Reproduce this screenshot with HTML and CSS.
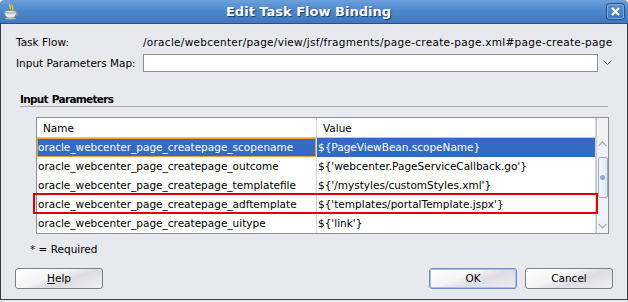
FILE: index.html
```html
<!DOCTYPE html>
<html>
<head>
<meta charset="utf-8">
<title>Edit Task Flow Binding</title>
<link rel="stylesheet" href="styles.css">
</head>
<body>
<div class="window">
    <div class="titlebar">
        <svg class="app-icon" width="16" height="17" viewBox="0 0 16 17">
            <path d="M7 1 C5 3 9 4 7 6 M9.5 2 C8 4 11 4.5 9.5 7" stroke="#f2c21a" stroke-width="1.6" fill="none"/>
            <ellipse cx="7.5" cy="9" rx="6" ry="1.6" fill="#d8d8d8" stroke="#8a8a8a" stroke-width="0.6"/>
            <path d="M1.5 9 C1.8 13 3.5 15 7.5 15 C11.5 15 13.2 13 13.5 9 C12 10.6 3 10.6 1.5 9 Z" fill="#e8e8e8" stroke="#8a8a8a" stroke-width="0.6"/>
            <path d="M13.3 10 C15.5 10 15.5 12.8 12.6 13" stroke="#9a9a9a" stroke-width="1.1" fill="none"/>
            <ellipse cx="7.5" cy="15.6" rx="5.5" ry="0.9" fill="#b8b8b8"/>
        </svg>
        <span class="title">Edit Task Flow Binding</span>
        <span class="close">
            <svg width="9" height="9" viewBox="0 0 9 9"><path d="M1 1 L8 8 M8 1 L1 8" stroke="#fff" stroke-width="2.2"/></svg>
        </span>
    </div>
    <div class="content">
        <div class="form">
            <span class="label">Task Flow:</span>
            <span class="value path">/oracle/webcenter/page/view/jsf/fragments/page-create-page.xml#page-create-page</span>
            <span class="label">Input Parameters Map:</span>
            <div class="combo">
                <div class="field"></div>
                <svg class="chevron" width="9" height="6" viewBox="0 0 9 6"><path d="M0.5 0.5 L4.5 4.5 L8.5 0.5" stroke="#555" stroke-width="1" fill="none"/></svg>
            </div>
        </div>

        <div class="section">Input Parameters</div>

        <div class="grid-wrap">
            <div class="grid">
                <table class="params">
                    <thead>
                        <tr><th class="col-name">Name</th><th>Value</th></tr>
                    </thead>
                    <tbody>
                        <tr class="selected"><td class="focus">oracle_webcenter_page_createpage_scopename</td><td>${PageViewBean.scopeName}</td></tr>
                        <tr><td>oracle_webcenter_page_createpage_outcome</td><td>${'webcenter.PageServiceCallback.go'}</td></tr>
                        <tr><td>oracle_webcenter_page_createpage_templatefile</td><td>${'/mystyles/customStyles.xml'}</td></tr>
                        <tr><td>oracle_webcenter_page_createpage_adftemplate</td><td>${'templates/portalTemplate.jspx'}</td></tr>
                        <tr><td>oracle_webcenter_page_createpage_uitype</td><td>${'link'}</td></tr>
                    </tbody>
                </table>
                <div class="scrollbar">
                    <svg class="arrow" width="9" height="6" viewBox="0 0 9 6"><path d="M0.5 5 L4.5 1 L8.5 5" stroke="#a8b0bc" stroke-width="1.3" fill="none"/></svg>
                    <div class="thumb"><span class="grip"></span></div>
                    <svg class="arrow down" width="9" height="6" viewBox="0 0 9 6"><path d="M0.5 1 L4.5 5 L8.5 1" stroke="#a8b0bc" stroke-width="1.3" fill="none"/></svg>
                </div>
            </div>
            <div class="mark"></div>
        </div>

        <div class="required">* = Required</div>

        <div class="buttons">
            <button class="btn"><u>H</u>elp</button>
            <span class="spacer"></span>
            <button class="btn default">OK</button>
            <button class="btn">Cancel</button>
        </div>
    </div>
</div>
</body>
</html>
```

FILE: styles.css
```css
html, body{
    margin: 0;
    padding: 0;
    background: #e8e8ef;
}
body{
    width: 628px;
    height: 302px;
    font-family: "DejaVu Sans", "Liberation Sans", sans-serif;
    font-size: 10.5px;
    color: #000;
}
.window{
    width: 628px;
    height: 300px;
    box-sizing: border-box;
    border: 1px solid #3a3d44;
    border-top: none;
    border-radius: 5px 5px 0 0;
    background: #e8e8ef;
    display: flex;
    flex-direction: column;
}
.titlebar{
    height: 23px;
    display: flex;
    align-items: center;
    position: relative;
    border-radius: 5px 5px 0 0;
    border-bottom: 1px solid #2a4f80;
    background: linear-gradient(#6da0dc 0, #4d87cc 45%, #3f78be 100%);
    margin: 0 -1px;
}
.app-icon{
    margin-left: 3px;
}
.title{
    flex: 1;
    text-align: center;
    color: #fff;
    font-weight: bold;
    font-size: 13px;
    text-shadow: 1px 1px 1px #1d3a66;
    padding-right: 8px;
}
.close{
    width: 17px;
    height: 15px;
    margin-right: 3px;
    border: 1px solid #25508c;
    border-radius: 3px;
    background: linear-gradient(#5b93d6, #3d75bb);
    box-shadow: inset 0 0 0 1px #7aa8e0;
    display: flex;
    align-items: center;
    justify-content: center;
}
.content{
    flex: 1;
    display: flex;
    flex-direction: column;
    padding: 9px 14px 0 14px;
}
.form{
    display: grid;
    grid-template-columns: 127px 1fr;
    row-gap: 3px;
    align-items: center;
    padding-left: 1px;
}
.form .label, .form .value{
    line-height: 18px;
}
.form .path{
    letter-spacing: 0.28px;
    white-space: nowrap;
}
.combo{
    display: flex;
    align-items: center;
}
.field{
    flex: 1;
    height: 16px;
    background: #fff;
    border: 1px solid #8d8f96;
}
.chevron{
    margin: 0 1px 0 5px;
}
.section{
    margin: 20px 5px 0 5px;
    font-weight: bold;
    letter-spacing: -0.7px;
    word-spacing: 1px;
    line-height: 14px;
    border-bottom: 1px solid #a5a7ad;
}
.grid-wrap{
    position: relative;
    margin: 10px 4px 0 21px;
}
.grid{
    display: flex;
    border: 1px solid #8e9097;
    background: #fff;
}
.params{
    flex: 1;
    border-collapse: collapse;
    table-layout: fixed;
}
.params th{
    text-align: left;
    font-weight: normal;
    height: 19px;
    padding: 0 0 0 6px;
    border-bottom: 1px solid #c4c6cc;
    border-right: 1px solid #d4d6dc;
}
.params .col-name{
    width: 273px;
}
.params td{
    height: 19px;
    padding: 0 0 0 1px;
    white-space: nowrap;
    overflow: hidden;
    border-right: 1px solid #d4d6dc;
    box-sizing: border-box;
}
.params .selected td{
    background: #336ac4;
    color: #fff;
}
.params td.focus{
    box-shadow: inset 0 0 0 1px #f0a23a;
}
.scrollbar{
    width: 12px;
    border-left: 1px solid #c4c6cc;
    background: #f2f2f6;
    display: flex;
    flex-direction: column;
    align-items: center;
    padding-top: 23px;
    box-sizing: border-box;
}
.thumb{
    width: 10px;
    height: 41px;
    margin-top: 10px;
    box-sizing: border-box;
    border: 1px solid #9aaac2;
    border-radius: 2px;
    background: linear-gradient(90deg, #f6f9fe, #dbe6f6);
    display: flex;
    align-items: center;
    justify-content: center;
}
.grip{
    width: 5px;
    height: 5px;
    border-radius: 50%;
    background: #8aa8d8;
}
.arrow.down{
    margin-top: auto;
    margin-bottom: 4px;
}
.mark{
    position: absolute;
    left: -3px;
    right: 11px;
    top: 76px;
    height: 17px;
    border: 2px solid #e00000;
}
.required{
    margin: 8px 0 0 15px;
    line-height: 14px;
}
.buttons{
    display: flex;
    gap: 8px;
    margin-top: 12px;
}
.spacer{
    flex: 1;
}
.btn{
    width: 88px;
    height: 21px;
    font-family: "DejaVu Sans", "Liberation Sans", sans-serif;
    font-size: 10.5px;
    color: #000;
    border: 1px solid #7d7f86;
    border-radius: 3px;
    background: linear-gradient(160deg, #ffffff 0, #f4f4f6 40%, #dcdce2 60%, #f0f0f4 100%);
    padding: 0;
}
.btn.default{
    border-color: #6f8fc4;
    box-shadow: inset 0 0 0 1px #a9c1e6;
}
```
